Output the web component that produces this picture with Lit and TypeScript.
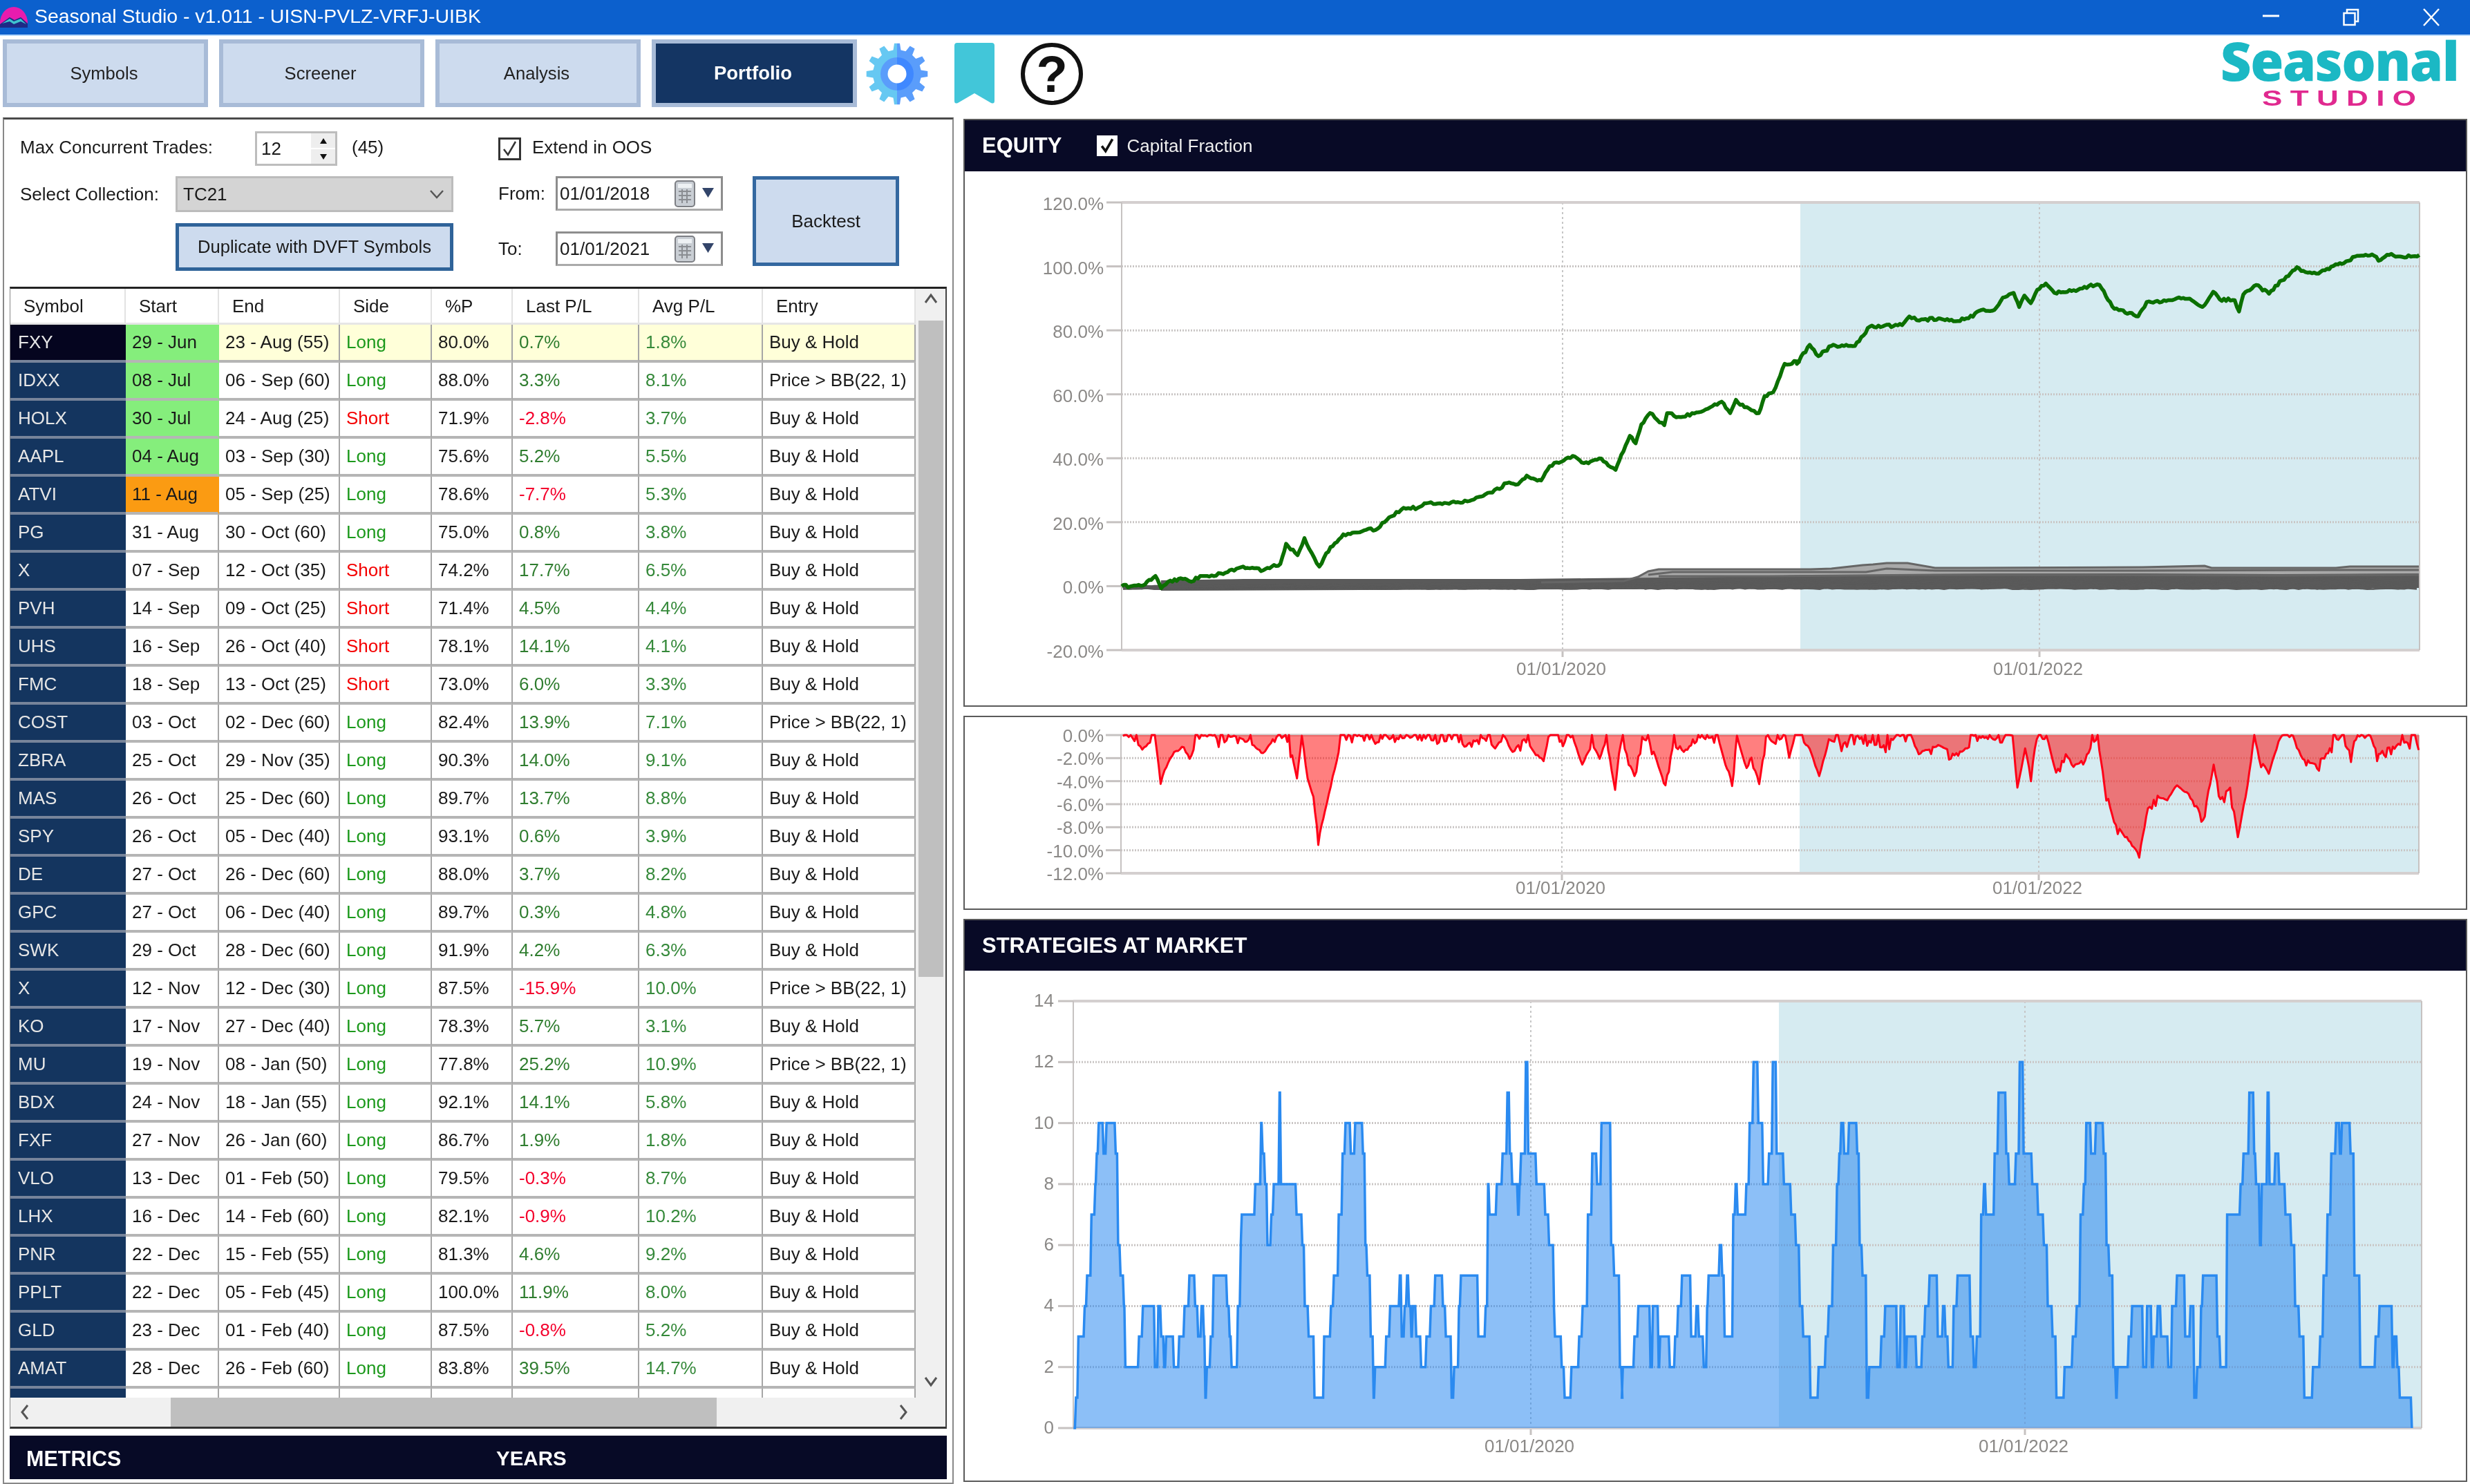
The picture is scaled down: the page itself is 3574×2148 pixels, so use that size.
import { LitElement, html, css, svg } from "lit";
import { customElement } from "lit/decorators.js";
import { classMap } from "lit/directives/class-map.js";

type Row = [string, string, string, string, string, string, string, string];
const BH = "Buy & Hold";
const PB = "Price > BB(22, 1)";
const rows: Row[] = [
  ["FXY", "29 - Jun", "23 - Aug (55)", "Long", "80.0%", "0.7%", "1.8%", BH],
  ["IDXX", "08 - Jul", "06 - Sep (60)", "Long", "88.0%", "3.3%", "8.1%", PB],
  ["HOLX", "30 - Jul", "24 - Aug (25)", "Short", "71.9%", "-2.8%", "3.7%", BH],
  ["AAPL", "04 - Aug", "03 - Sep (30)", "Long", "75.6%", "5.2%", "5.5%", BH],
  ["ATVI", "11 - Aug", "05 - Sep (25)", "Long", "78.6%", "-7.7%", "5.3%", BH],
  ["PG", "31 - Aug", "30 - Oct (60)", "Long", "75.0%", "0.8%", "3.8%", BH],
  ["X", "07 - Sep", "12 - Oct (35)", "Short", "74.2%", "17.7%", "6.5%", BH],
  ["PVH", "14 - Sep", "09 - Oct (25)", "Short", "71.4%", "4.5%", "4.4%", BH],
  ["UHS", "16 - Sep", "26 - Oct (40)", "Short", "78.1%", "14.1%", "4.1%", BH],
  ["FMC", "18 - Sep", "13 - Oct (25)", "Short", "73.0%", "6.0%", "3.3%", BH],
  ["COST", "03 - Oct", "02 - Dec (60)", "Long", "82.4%", "13.9%", "7.1%", PB],
  ["ZBRA", "25 - Oct", "29 - Nov (35)", "Long", "90.3%", "14.0%", "9.1%", BH],
  ["MAS", "26 - Oct", "25 - Dec (60)", "Long", "89.7%", "13.7%", "8.8%", BH],
  ["SPY", "26 - Oct", "05 - Dec (40)", "Long", "93.1%", "0.6%", "3.9%", BH],
  ["DE", "27 - Oct", "26 - Dec (60)", "Long", "88.0%", "3.7%", "8.2%", BH],
  ["GPC", "27 - Oct", "06 - Dec (40)", "Long", "89.7%", "0.3%", "4.8%", BH],
  ["SWK", "29 - Oct", "28 - Dec (60)", "Long", "91.9%", "4.2%", "6.3%", BH],
  ["X", "12 - Nov", "12 - Dec (30)", "Long", "87.5%", "-15.9%", "10.0%", PB],
  ["KO", "17 - Nov", "27 - Dec (40)", "Long", "78.3%", "5.7%", "3.1%", BH],
  ["MU", "19 - Nov", "08 - Jan (50)", "Long", "77.8%", "25.2%", "10.9%", PB],
  ["BDX", "24 - Nov", "18 - Jan (55)", "Long", "92.1%", "14.1%", "5.8%", BH],
  ["FXF", "27 - Nov", "26 - Jan (60)", "Long", "86.7%", "1.9%", "1.8%", BH],
  ["VLO", "13 - Dec", "01 - Feb (50)", "Long", "79.5%", "-0.3%", "8.7%", BH],
  ["LHX", "16 - Dec", "14 - Feb (60)", "Long", "82.1%", "-0.9%", "10.2%", BH],
  ["PNR", "22 - Dec", "15 - Feb (55)", "Long", "81.3%", "4.6%", "9.2%", BH],
  ["PPLT", "22 - Dec", "05 - Feb (45)", "Long", "100.0%", "11.9%", "8.0%", BH],
  ["GLD", "23 - Dec", "01 - Feb (40)", "Long", "87.5%", "-0.8%", "5.2%", BH],
  ["AMAT", "28 - Dec", "26 - Feb (60)", "Long", "83.8%", "39.5%", "14.7%", BH],
  ["", "", "", "", "", "", "", ""],
];
const headers = ["Symbol", "Start", "End", "Side", "%P", "Last P/L", "Avg P/L", "Entry"];
const startColor: Record<number, string> = { 0: "g", 1: "g", 2: "g", 3: "g", 4: "o" };

function rng(seed: number) {
  return () => {
    seed |= 0; seed = (seed + 0x6d2b79f5) | 0;
    let t = Math.imul(seed ^ (seed >>> 15), 1 | seed);
    t = (t + Math.imul(t ^ (t >>> 7), 61 | t)) ^ t;
    return ((t ^ (t >>> 14)) >>> 0) / 4294967296;
  };
}

const eqA = [[293,1237],[330,1235],[352,1210],[362,1242],[378,1222],[400,1218],[415,1225],[430,1210],[470,1205],[505,1185],[540,1195],[570,1178],[580,1125],[600,1155],[612,1110],[625,1150],[638,1185],[650,1150],[680,1100],[700,1095],[740,1085],[760,1055],[785,1030],[810,1030],[825,1018],[880,1015],[900,1012],[940,990],[965,965],[985,968],[1000,945],[1015,955],[1025,958],[1040,920],[1080,893],[1100,912],[1130,900],[1155,930],[1165,890],[1180,840],[1190,860],[1200,810],[1215,780],[1240,812],[1245,780],[1265,790],[1300,778],[1340,750],[1355,780],[1365,745],[1380,765],[1405,780],[1415,735],[1430,725],[1450,650],[1475,645]]
  .map(([x, y]) => [1380 + x / 1.206, 170 + y / 1.823]);
const eqB = [[0,650],[30,600],[50,630],[80,603],[135,603],[170,552],[245,548],[262,525],[285,536],[330,530],[365,538],[400,530],[430,508],[460,508],[480,475],[505,463],[518,500],[530,470],[545,490],[560,455],[580,438],[600,463],[640,458],[680,445],[705,442],[740,505],[795,525],[815,487],[850,487],[890,475],[915,478],[945,500],[970,460],[985,480],[1020,482],[1030,512],[1040,467],[1070,442],[1100,465],[1130,430],[1165,395],[1175,405],[1215,412],[1260,388],[1310,365],[1345,365],[1355,378],[1385,360],[1400,367],[1450,363]]
  .map(([x, y]) => [2600 + x / 1.61, 170 + y / 1.823]);

function jitterPts(pts: number[][], step: number, amp: number, seed: number, minY = -Infinity) {
  const r = rng(seed);
  const out: number[][] = [];
  for (let i = 0; i < pts.length - 1; i++) {
    const [x0, y0] = pts[i];
    const [x1, y1] = pts[i + 1];
    const n = Math.max(1, Math.round((x1 - x0) / step));
    for (let k = 0; k < n; k++) {
      const t = k / n;
      const a = k === 0 ? 0 : (r() - 0.5) * amp;
      out.push([x0 + (x1 - x0) * t, Math.max(minY, y0 + (y1 - y0) * t + a)]);
    }
  }
  out.push(pts[pts.length - 1]);
  return out;
}
const toPoints = (p: number[][]) => p.map(([x, y]) => `${x.toFixed(1)},${y.toFixed(1)}`).join(" ");
const equityLine = toPoints(jitterPts([...eqA, ...eqB], 3.2, 4.2, 7));

function greyLines() {
  const r = rng(21);
  const lines: string[] = [];
  const x0 = 1625, x1 = 3500;
  for (let i = 0; i < 34; i++) {
    const top = i / 33;
    const pts: string[] = [];
    for (let x = x0; x <= x1; x += 9) {
      const t = (x - x0) / (x1 - x0);
      const rise = t < 0.3 ? (t / 0.3) * 5 : t < 0.5 ? 5 + (t - 0.3) * 30 : 11 + (t - 0.5) * 8;
      const y = 852 - top * (rise + 3) + (r() - 0.5) * 2.4;
      pts.push(`${x},${y.toFixed(1)}`);
    }
    lines.push(pts.join(" "));
  }
  return lines;
}
const greyBundle = greyLines();
const upper = (ys: number[][]) => ys.map(([x, y]) => `${x},${y}`).join(" ");
const upA = [[2230,843],[2350,841],[2370,835],[2385,827],[2400,824],[2620,824],[2650,823],[2695,818],[2710,817],[2730,815],[2760,815],[2800,822],[2850,822],[3100,821],[3190,819],[3200,822],[3380,822],[3400,820],[3500,820]];
const greyUpperA = upper(upA);
const greyUpperB = upper([[2385,832],[2420,828],[2700,828],[2730,823],[2800,826],[3100,826],[3400,825],[3500,825]]);
const greyUpperC = upper([[2400,834],[2560,834],[2800,832],[3000,832],[3300,833],[3500,832]]);
const greyHaze = upper([...upA, [3500, 838], [2230, 843]]);
const greyBlock = upper([[1680,855],[1680,840],[1800,838],[2200,838],[2300,837],[2500,835],[2620,832],[2700,832],[2890,830],[3100,830],[3300,831],[3500,830],[3500,851],[2900,851],[2300,853]]);

const ddRaw = [[175,135],[185,145],[195,195],[203,165],[208,135],[214,325],[222,250],[228,205],[238,185],[244,235],[252,150],[258,135],[270,135],[278,165],[290,135],[305,160],[320,210],[330,150],[345,135],[350,220],[355,320],[360,135],[366,320],[372,400],[377,590],[384,460],[392,310],[400,170],[410,135],[430,135],[436,170],[445,140],[460,150],[470,135],[480,160],[490,145],[500,170],[515,150],[530,180],[545,140],[560,190],[570,140],[578,205],[590,150],[600,205],[610,245],[615,140],[625,135],[630,165],[640,135],[650,260],[660,170],[668,235],[675,150],[684,370],[690,140],[698,240],[704,310],[712,140],[722,180],[736,350],[745,150],[755,205],[770,150],[790,135],[798,260],[805,330],[810,135],[820,275],[825,230],[833,345],[840,140],[850,170],[860,135],[864,230],[870,135],[885,190],[895,310],[905,150],[920,170],[935,135],[960,185],[975,140],[990,135],[998,215],[1018,175],[1035,220],[1050,185],[1055,135],[1075,150],[1095,135],[1100,360],[1108,190],[1114,310],[1120,135],[1130,135],[1140,295],[1150,215],[1158,270],[1170,230],[1183,135],[1190,350],[1200,510],[1215,590],[1226,650],[1235,450],[1245,395],[1255,415],[1265,350],[1275,380],[1285,440],[1292,500],[1303,260],[1310,410],[1320,360],[1328,575],[1338,350],[1345,135],[1350,235],[1360,300],[1372,135],[1385,135],[1395,235],[1410,260],[1425,180],[1432,135],[1445,215],[1450,135],[1465,135],[1472,215],[1490,175],[1500,165],[1515,170]];
const ddPts = ddRaw.map(([x, y]) => [1380 + x / 0.7147, 1020 + y / 3]);
const ddJ = (() => {
  const base = jitterPts(ddPts, 2.6, 4, 3, 1064);
  const r = rng(11);
  return base.map(([x, y]) => {
    const f = y < 1078 && r() > 0.6 ? -(y - 1064) : 0;
    const d = r() > 0.86 ? 4 + r() * 8 : 0;
    return [x, Math.max(1064, y + f + d)];
  });
})();
const ddLine = toPoints(ddJ);
const ddArea = `1623,1064 ${ddLine} 3500,1064`;

const mkA = [[247,0],[250,1],[255,3],[268,4],[273,5],[282,7],[290,8],[293,9],[297,10],[307,9],[313,10],[332,9],[337,6],[342,5],[349,4],[352,2],[380,3],[388,4],[413,2],[420,4],[426,3],[432,2],[436,3],[452,2],[463,3],[474,4],[484,5],[496,4],[502,3],[509,4],[514,3],[517,1],[520,2],[528,3],[534,5],[562,4],[567,3],[571,2],[584,4],[590,6],[592,7],[620,8],[632,10],[635,9],[640,8],[645,6],[653,7],[658,8],[670,11],[673,8],[705,7],[717,6],[722,4],[730,3],[742,1],[762,3],[776,4],[782,5],[792,7],[800,9],[806,10],[817,9],[826,10],[842,9],[847,6],[851,5],[858,3],[864,1],[867,2],[890,3],[898,4],[918,5],[922,3],[928,4],[933,5],[937,4],[942,3],[945,4],[952,3],[962,2],[973,3],[982,4],[991,5],[1007,4],[1013,3],[1025,1],[1030,2],[1040,4],[1044,5],[1080,3],[1095,4],[1100,8],[1103,7],[1118,8],[1130,9],[1140,11],[1145,9],[1150,8],[1162,7],[1165,8],[1168,9],[1178,12],[1183,9],[1200,8],[1218,7],[1226,6],[1236,4],[1238,3],[1252,2],[1258,1],[1272,2],[1288,3],[1295,4],[1306,7],[1315,9],[1325,8],[1334,10],[1354,6],[1360,5],[1372,2],[1377,1],[1378,2],[1402,3],[1410,4],[1435,2],[1440,4],[1452,2],[1455,3],[1475,2],[1486,3],[1492,4],[1500,5],[1519,3],[1530,4],[1535,3],[1545,2],[1552,4],[1555,5]];
const mkB = [[10,6],[15,5],[20,3],[38,7],[43,8],[47,7],[65,8],[72,10],[80,12],[90,10],[100,8],[112,9],[120,12],[128,9],[143,8],[158,7],[168,6],[176,4],[183,3],[198,1],[215,2],[230,3],[236,4],[245,6],[253,8],[258,9],[262,10],[268,9],[278,10],[295,9],[300,6],[306,5],[315,1],[320,2],[345,3],[353,4],[378,2],[385,4],[394,2],[398,3],[418,2],[430,3],[436,4],[445,5],[462,3],[473,4],[478,3],[484,2],[495,4],[503,5],[530,3],[537,2],[543,3],[552,7],[558,8],[562,7],[575,7],[580,9],[588,11],[604,9],[610,8],[624,9],[632,12],[640,9],[658,8],[670,7],[682,6],[690,4],[700,3],[708,1],[725,2],[742,3],[750,4],[758,7],[765,8],[770,10],[780,9],[790,10],[806,9],[812,6],[818,5],[826,2],[832,1],[835,2],[858,3],[865,4],[888,2],[896,4],[906,2],[910,3],[918,4],[925,3],[933,3],[940,2],[948,4],[958,5],[975,3],[986,4],[994,1],[1000,2],[1008,4],[1012,5],[1042,3],[1048,2],[1062,7],[1090,8],[1096,9],[1108,11],[1118,9],[1122,8],[1130,6],[1134,8],[1146,11],[1150,8],[1162,9],[1170,8],[1183,7],[1195,6],[1203,4],[1212,3],[1222,1],[1240,2],[1255,3],[1262,5],[1270,7],[1278,9],[1288,10],[1296,9],[1300,10],[1318,9],[1326,5],[1338,2],[1370,3],[1378,4],[1405,2],[1409,3],[1415,2],[1420,1],[1445,0]];
const mkY = (l: number) => 2067 - l * 44.14;
const mkSteps = [
  ...mkA.map(([x, l]) => [1380 + x / 1.4255, l]),
  ...mkB.map(([x, l]) => [2480 + x / 1.433, l]),
];
function stepLine() {
  const pts: string[] = [];
  let prev = 0;
  for (const [x, l] of mkSteps) {
    pts.push(`${x.toFixed(1)},${mkY(prev).toFixed(1)}`);
    pts.push(`${(x + 1.5).toFixed(1)},${mkY(l).toFixed(1)}`);
    prev = l;
  }
  return pts.join(" ");
}
const mkLine = stepLine();

function gearPath(cx: number, cy: number, R: number, r: number, teeth: number) {
  const p: string[] = [];
  for (let i = 0; i < teeth; i++) {
    const a = (i / teeth) * Math.PI * 2 - Math.PI / 2;
    const w = (Math.PI * 2) / teeth;
    const pts: [number, number][] = [
      [r, a - w * 0.3], [R, a - w * 0.17], [R, a + w * 0.17], [r, a + w * 0.3],
    ];
    for (const [rad, ang] of pts) {
      p.push(`${(cx + rad * Math.cos(ang)).toFixed(1)} ${(cy + rad * Math.sin(ang)).toFixed(1)}`);
    }
  }
  return "M" + p.join("L") + "Z";
}

function axes(opts: {
  l: number; r: number; t: number; b: number; oos: number;
  ys: { y: number; label: string }[]; xs: number[]; labelRight: number; dateY: number;
  dateOff: number; labelOff: number;
}) {
  const { l, r, t, b, oos, ys, xs, labelRight, dateY, dateOff, labelOff } = opts;
  return svg`
    <rect class="oos" x=${oos} y=${t} width=${r - oos} height=${b - t}></rect>
    ${ys.map((g, i) => svg`
      ${i > 0 && i < ys.length - 1 ? svg`<line class="grid" x1=${l} x2=${r} y1=${g.y} y2=${g.y}></line>` : ""}
      <line class="tick" x1=${l - 22} x2=${l} y1=${g.y} y2=${g.y}></line>
      <text class="axis" x=${labelRight} y=${g.y + labelOff} text-anchor="end">${g.label}</text>
    `)}
    ${xs.map((x) => svg`
      <line class="vgrid" x1=${x} x2=${x} y1=${t} y2=${b}></line>
      <line class="tick" x1=${x} x2=${x} y1=${b} y2=${b + 10}></line>
      <text class="axis" x=${x + dateOff} y=${dateY} text-anchor="middle">01/01/${x === xs[0] ? 2020 : 2022}</text>
    `)}
    <line class="frame" x1=${l} x2=${r} y1=${t} y2=${t}></line>
    <line class="frame" x1=${l} x2=${r} y1=${b} y2=${b}></line>
    <line class="side" x1=${l} x2=${l} y1=${t} y2=${b}></line>
    <line class="side" x1=${r} x2=${r} y1=${t} y2=${b}></line>
  `;
}

@customElement("app-root")
export class AppRoot extends LitElement {
  static styles = css`
    :host {
      display: block; width: 3574px; height: 2148px; overflow: hidden; background: #fff;
      font-family: "Liberation Sans", Arial, sans-serif; font-size: 26px; color: #1a1a1a;
      filter: blur(0.7px);
    }
    .app { display: flex; flex-direction: column; height: 2148px; }

    .titlebar {
      height: 50px; background: #0c60cd; color: #fff; display: flex; align-items: center;
      border-bottom: 2px solid #b5d7fb; box-sizing: content-box; flex: none;
    }
    .appicon { width: 42px; height: 42px; flex: none; margin-left: 0; }
    .titletext { margin: 0 0 4px 8px; font-size: 28.5px; letter-spacing: -0.03px; white-space: nowrap; }
    .winctl { margin-left: auto; display: flex; align-items: center; gap: 92px; margin-right: 44px; }
    .winctl svg { display: block; width: 24px; height: 26px; }

    .toolbar { display: flex; height: 118px; flex: none; align-items: flex-start; padding: 5px 0 0 4px; box-sizing: border-box; }
    .tab {
      width: 297px; height: 98px; box-sizing: border-box; background: #cddbee;
      border: 6px solid #a8bbd7; display: flex; align-items: center; justify-content: center;
      margin-right: 16px; font-size: 25.6px; color: #222; padding-right: 4px;
    }
    .tab.on { background: #143563; color: #fff; font-weight: 700; font-size: 27.5px; }
    .gear { width: 90px; height: 90px; margin: 5px 0 0 -3px; flex: none; }
    .bookmark { width: 58px; height: 88px; margin: 5px 0 0 38px; flex: none; }
    .help { width: 90px; height: 90px; margin: 5px 0 0 38px; flex: none; }
    .logo { margin: -3px 17px 0 auto; width: 344px; display: flex; flex-direction: column; align-items: center; }
    .logo .a { font-family: "Open Sans", sans-serif; font-weight: 800; font-size: 78px; line-height: 66px; color: #1bb8c4; letter-spacing: -1.7px; }
    .logo .b { font-family: "Liberation Sans", sans-serif; font-weight: 700; font-size: 31px; line-height: 26px; letter-spacing: 8px; color: #e0298f; margin-top: 10px; padding-left: 8px; transform: scaleX(1.42); }

    .main { display: flex; flex: 1; min-height: 0; padding-left: 4px; }

    .left {
      width: 1376px; flex: none; box-sizing: border-box; border: 2px solid #888; border-top: 3px solid #4a4a4a;
      display: flex; flex-direction: column; padding: 0 6px 0 8px;
    }
    .controls { height: 242px; flex: none; display: flex; padding: 17px 0 0 15px; box-sizing: border-box; }
    .col1 { width: 627px; flex: none; }
    .col2 { width: 325px; flex: none; margin-left: 65px; }
    .r { display: flex; align-items: center; }
    .r1 { height: 50px; }
    .lbl1 { width: 340px; flex: none; margin-bottom: 4px; }
    .lbl2 { width: 225px; flex: none; }
    .spin {
      width: 119px; height: 50px; box-sizing: border-box; border: 3px solid #bdbdbd; display: flex;
      align-items: center; justify-content: space-between; padding-left: 6px; flex: none;
    }
    .spinbtns { width: 35px; height: 44px; display: flex; flex-direction: column; gap: 2px; }
    .spinbtns span { flex: 1; background: #eee; display: flex; align-items: center; justify-content: center; }
    .spinbtns i { width: 0; height: 0; border-left: 5px solid transparent; border-right: 5px solid transparent; }
    .spinbtns i.u { border-bottom: 8px solid #111; }
    .spinbtns i.d { border-top: 8px solid #111; }
    .count { margin-left: 21px; margin-bottom: 4px; }
    .check { width: 33px; height: 33px; box-sizing: border-box; flex: none; display: block; }
    .ext { margin: 0 0 4px 16px; }
    .r2 { height: 52px; margin-top: 15px; }
    .select {
      width: 402px; height: 52px; box-sizing: border-box; background: #d4d4d4; border: 3px solid #bcbcbc; flex: none;
      display: flex; align-items: center; justify-content: space-between; padding: 0 10px 0 8px;
    }
    .dup {
      margin: 16px 0 0 225px; width: 402px; height: 69px; box-sizing: border-box; background: #cddbee;
      border: 5px solid #2f6399; display: flex; align-items: center; justify-content: center; font-size: 25.6px;
    }
    .dlabel { width: 83px; flex: none; }
    .date {
      width: 242px; height: 50px; flex: none; box-sizing: border-box; border: 3px solid #8d8d8d;
      border-bottom-color: #aaa; display: flex; align-items: center; padding-left: 3px;
    }
    .date svg { width: 62px; height: 44px; margin-left: auto; margin-right: 6px; display: block; }
    .c2a { height: 50px; }
    .c2b { margin-top: 15px; }
    .c2c { margin-top: 30px; }
    .backtest {
      width: 212px; height: 130px; box-sizing: border-box; margin: 65px 0 0 43px; background: #cddbee;
      border: 5px solid #3468a0; display: flex; align-items: center; justify-content: center; flex: none;
    }

    .tablewrap {
      height: 1653px; flex: none; box-sizing: border-box; border-top: 3px solid #222; border-bottom: 3px solid #333;
      border-left: 1px solid #888; border-right: 2px solid #444; display: grid;
      grid-template-columns: 1310px 1fr; grid-template-rows: 1fr 42px; width: 1356px; overflow: hidden;
    }
    .tbl { min-height: 0; overflow: hidden; grid-column: 1; grid-row: 1; }
    .hrow, .drow {
      display: grid; grid-template-columns: 167px 135px 175px 133px 117px 183px 179px 221px;
    }
    .hrow { height: 52px; }
    .hrow div {
      padding: 2px 0 0 19px; display: flex; align-items: center; border-right: 2px solid #e2e2e2;
      border-bottom: 3px solid #e6e6e6; box-sizing: border-box; white-space: nowrap;
    }
    .drow { height: 55px; }
    .drow div {
      padding-left: 9px; display: flex; align-items: center; box-sizing: border-box; white-space: nowrap;
      border-right: 2px solid #a6a6a6; border-bottom: 4px solid #b5b5b5; overflow: hidden;
    }
    .drow.sel div { background: #ffffd9; }
    .drow div.sym { background: #14355f; color: #e6e6e6; padding-left: 11px; border-right: none; border-bottom-color: #77849a; }
    .drow.sel div.sym { background: #05051f; }
    .drow div.g { background: #85ee7c; border-right-color: #85ee7c; }
    .drow div.o { background: #fb9b12; border-right-color: #fb9b12; }
    .long { color: #1c991c; }
    .short { color: #f40000; }
    .pos { color: #2f7d2f; }
    .avg { color: #35893a; }
    .neg { color: #f4002c; }
    .vs { grid-column: 2; grid-row: 1 / 3; background: #f0f0f0; display: flex; flex-direction: column; align-items: center; }
    .vs svg { display: block; width: 22px; height: 16px; flex: none; }
    .vs .up { margin-top: 6px; }
    .vs .thumb { width: 36px; height: 950px; background: #bfbfbf; margin-top: 24px; flex: none; }
    .vs .dn { margin-top: 578px; }
    .hs { grid-column: 1; grid-row: 2; background: #f0f0f0; display: flex; align-items: center; height: 42px; }
    .hs svg { display: block; width: 18px; height: 24px; flex: none; }
    .hs .thumb { width: 790px; height: 42px; background: #bfbfbf; margin-left: 202px; flex: none; }
    .hs .al { margin-left: 12px; }
    .hs .ar { margin-left: 261px; }
    .metrics {
      margin-top: 10px; height: 63px; padding-top: 3px; box-sizing: border-box; flex: none; background: #070a26; color: #fff; font-weight: 700; font-size: 30.5px;
      display: flex; align-items: center; width: 1356px;
    }
    .metrics .m { width: 680px; padding-left: 24px; box-sizing: content-box; flex: none; }
    .metrics .y { font-size: 29.5px; }

    .right { margin-left: 14px; margin-top: 2px; width: 2176px; flex: none; display: flex; flex-direction: column; }
    .panel { border: 2px solid #5a5a5a; box-sizing: border-box; background: #fff; }
    .p1 { height: 851px; flex: none; }
    .p2 { height: 281px; flex: none; margin-top: 13px; }
    .p3 { flex: none; height: 815px; margin-top: 13px; }
    .phead {
      height: 74px; background: #080a26; color: #fff; display: flex; align-items: center;
      padding-left: 25px; font-weight: 700; font-size: 31px;
    }
    .p3 .phead { height: 73px; }
    .phead .cap { font-weight: 400; font-size: 26px; color: #eee; margin-left: 13px; }
    .phead .check { margin-left: 51px; width: 30px; height: 30px; }
    .chart { display: block; }
    .chart .axis { font-family: "Liberation Sans", Arial, sans-serif; font-size: 26px; fill: #8b8987; }
    .chart .oos { fill: #d6ebf1; }
    .chart .grid { stroke: #c9c5c4; stroke-width: 3; stroke-dasharray: 2 2; }
    .chart .vgrid { stroke: #c6c6c6; stroke-width: 2; stroke-dasharray: 3 4; }
    .chart .tick { stroke: #c6c2c1; stroke-width: 3; }
    .chart .frame { stroke: #d4cfcf; stroke-width: 4; }
    .chart .side { stroke: #c6c2c1; stroke-width: 2; }
    .chart .eq { fill: none; stroke: #0b7000; stroke-width: 5.5; stroke-linejoin: round; }
    .chart .greyl { fill: none; stroke: #5a5a5a; stroke-width: 2; }
    .chart .greyu { fill: none; stroke: #666; stroke-width: 3; }
    .chart .greyh { fill: #a9a9a9; }
    .chart .greyb { fill: #5a5a5a; }
    .chart .dda { fill: rgba(255, 0, 0, 0.5); }
    .chart .ddl { fill: none; stroke: #ff0018; stroke-width: 3; stroke-linejoin: round; }
    .chart .mka { fill: rgba(26, 128, 240, 0.5); }
    .chart .mkl { fill: none; stroke: #2a8af0; stroke-width: 3.5; }
  `;

  private checkbox(light: boolean) {
    return html`<svg class="check" viewBox="0 0 33 33">
      <rect x="1.5" y="1.5" width="30" height="30" fill="#fff" stroke=${light ? "#fff" : "#333"} stroke-width="3"></rect>
      <path d="M8 17 L14 25 L25 6" fill="none" stroke=${light ? "#111" : "#333"} stroke-width=${light ? 4 : 2.5}></path>
    </svg>`;
  }

  private cal() {
    return html`<svg viewBox="0 0 62 44">
      <rect x="2" y="4" width="28" height="37" rx="4" fill="#c9ced4" stroke="#7d7f84" stroke-width="2"></rect>
      <rect x="6" y="8" width="20" height="6" fill="#eef1f4"></rect>
      <path d="M7 19h18M7 25h18M7 31h18M12 16v20M19 16v20" stroke="#8a8d92" stroke-width="2"></path>
      <path d="M41 14h17l-8.5 14z" fill="#33456a"></path>
    </svg>`;
  }

  render() {
    const eqYs = [120, 100, 80, 60, 40, 20, 0, -20].map((v, i) => ({ y: 293 + i * 92.57, label: v.toFixed(1) + "%" }));
    const ddYs = [0, -2, -4, -6, -8, -10, -12].map((v, i) => ({ y: 1064 + i * 33.33, label: (v === 0 ? "0.0" : v.toFixed(1)) + "%" }));
    const mkYs = [14, 12, 10, 8, 6, 4, 2, 0].map((v) => ({ y: mkY(v), label: String(v) }));
    return html`<div class="app">
      <div class="titlebar">
        <svg class="appicon" viewBox="0 0 42 42">
          <path d="M0 29 A20 23 0 0 1 40 29 L40 36 L0 36Z" fill="#e81cae"></path>
          <path d="M0 31 L14 21 L21 25 L30 21 L40 30 L40 36 L0 36Z" fill="#1d2a86"></path>
          <path d="M3 30 L14 23 L20 27 L30 23 L38 31 L30 27 L20 31 L14 27Z" fill="#3fc4cf"></path>
        </svg>
        <span class="titletext">Seasonal Studio - v1.011 - UISN-PVLZ-VRFJ-UIBK</span>
        <div class="winctl">
          <svg viewBox="0 0 24 26"><path d="M0 11h24" stroke="#fff" stroke-width="3"></path></svg>
          <svg viewBox="0 0 24 26"><rect x="1.5" y="7" width="16" height="17" fill="none" stroke="#fff" stroke-width="2.5"></rect><path d="M6 7V2h16v17h-4" fill="none" stroke="#fff" stroke-width="2.5"></path></svg>
          <svg viewBox="0 0 24 26"><path d="M1 1L23 25M23 1L1 25" stroke="#fff" stroke-width="2.5"></path></svg>
        </div>
      </div>

      <div class="toolbar">
        <div class="tab">Symbols</div>
        <div class="tab">Screener</div>
        <div class="tab">Analysis</div>
        <div class="tab on">Portfolio</div>
        <svg class="gear" viewBox="0 0 90 90">
          <defs>
            <clipPath id="gl"><rect x="0" y="0" width="45" height="90"></rect></clipPath>
            <clipPath id="gr"><rect x="45" y="0" width="45" height="90"></rect></clipPath>
          </defs>
          <path d=${gearPath(45, 45, 44.5, 35, 12)} fill="#66c8f2" clip-path="url(#gl)"></path>
          <path d=${gearPath(45, 45, 44.5, 35, 12)} fill="#5a9dfb" clip-path="url(#gr)"></path>
          <circle cx="45" cy="45" r="24" fill="#5a9dfb" clip-path="url(#gl)"></circle>
          <circle cx="45" cy="45" r="24" fill="#3f88ff" clip-path="url(#gr)"></circle>
          <circle cx="45" cy="45" r="13.5" fill="#fff"></circle>
        </svg>
        <svg class="bookmark" viewBox="0 0 58 88"><path d="M4 0H54Q58 0 58 4V84Q58 89 53 87L29 73L5 87Q0 89 0 84V4Q0 0 4 0Z" fill="#42c6d9"></path></svg>
        <svg class="help" viewBox="0 0 90 90">
          <circle cx="45" cy="45" r="42" fill="#fff" stroke="#111" stroke-width="6"></circle>
          <text x="45" y="71" text-anchor="middle" font-family="Liberation Sans, sans-serif" font-weight="700" font-size="74" fill="#111">?</text>
        </svg>
        <div class="logo"><span class="a">Seasonal</span><span class="b">STUDIO</span></div>
      </div>

      <div class="main">
        <section class="left">
          <div class="controls">
            <div class="col1">
              <div class="r r1">
                <span class="lbl1">Max Concurrent Trades:</span>
                <div class="spin"><span>12</span><div class="spinbtns"><span><i class="u"></i></span><span><i class="d"></i></span></div></div>
                <span class="count">(45)</span>
              </div>
              <div class="r r2">
                <span class="lbl2">Select Collection:</span>
                <div class="select"><span>TC21</span>
                  <svg width="22" height="14" viewBox="0 0 22 14"><path d="M2 2L11 12L20 2" fill="none" stroke="#555" stroke-width="2.5"></path></svg>
                </div>
              </div>
              <div class="dup">Duplicate with DVFT Symbols</div>
            </div>
            <div class="col2">
              <div class="r c2a">${this.checkbox(false)}<span class="ext">Extend in OOS</span></div>
              <div class="r c2b"><span class="dlabel">From:</span><div class="date"><span>01/01/2018</span>${this.cal()}</div></div>
              <div class="r c2c"><span class="dlabel">To:</span><div class="date"><span>01/01/2021</span>${this.cal()}</div></div>
            </div>
            <div class="backtest">Backtest</div>
          </div>

          <div class="tablewrap">
            <div class="tbl">
              <div class="hrow">${headers.map((h) => html`<div>${h}</div>`)}</div>
              ${rows.map((r, i) => html`<div class=${classMap({ drow: true, sel: i === 0 })}>
                <div class="sym">${r[0]}</div>
                <div class=${startColor[i] ?? ""}>${r[1]}</div>
                <div>${r[2]}</div>
                <div class=${r[3] === "Short" ? "short" : "long"}>${r[3]}</div>
                <div>${r[4]}</div>
                <div class=${r[5].startsWith("-") ? "neg" : "pos"}>${r[5]}</div>
                <div class="avg">${r[6]}</div>
                <div>${r[7]}</div>
              </div>`)}
            </div>
            <div class="vs">
              <svg class="up" viewBox="0 0 22 16"><path d="M3 14L11 3L19 14" fill="none" stroke="#555" stroke-width="3"></path></svg>
              <div class="thumb"></div>
              <svg class="dn" viewBox="0 0 22 16"><path d="M3 2L11 13L19 2" fill="none" stroke="#555" stroke-width="3"></path></svg>
            </div>
            <div class="hs">
              <svg class="al" viewBox="0 0 18 24"><path d="M13 2L5 12L13 22" fill="none" stroke="#555" stroke-width="3"></path></svg>
              <div class="thumb"></div>
              <svg class="ar" viewBox="0 0 18 24"><path d="M5 2L13 12L5 22" fill="none" stroke="#555" stroke-width="3"></path></svg>
            </div>
          </div>
          <div class="metrics"><span class="m">METRICS</span><span class="y">YEARS</span></div>
        </section>

        <div class="right">
          <section class="panel p1">
            <div class="phead">EQUITY ${this.checkbox(true)}<span class="cap">Capital Fraction</span></div>
            <svg class="chart" width="2172" height="773" viewBox="1396 248 2172 773">
              ${axes({ l: 1623, r: 3501, t: 293, b: 941, oos: 2605, ys: eqYs, xs: [2261, 2951], labelRight: 1597, dateY: 977, dateOff: -2, labelOff: 11 })}
              <polygon class="greyh" points=${greyHaze}></polygon>
              <polygon class="greyb" points=${greyBlock}></polygon>
              ${greyBundle.map((p) => svg`<polyline class="greyl" points=${p}></polyline>`)}
              <polyline class="greyu" points=${greyUpperA}></polyline>
              <polyline class="greyu" points=${greyUpperB}></polyline>
              <polyline class="greyu" points=${greyUpperC}></polyline>
              <polyline class="eq" points=${equityLine}></polyline>
            </svg>
          </section>
          <section class="panel p2">
            <svg class="chart" width="2172" height="277" viewBox="1396 1038 2172 277">
              ${axes({ l: 1622, r: 3500, t: 1064, b: 1264, oos: 2604, ys: ddYs, xs: [2260, 2950], labelRight: 1597, dateY: 1294, dateOff: -2, labelOff: 10 })}
              <polygon class="dda" points=${ddArea}></polygon>
              <polyline class="ddl" points=${ddLine}></polyline>
            </svg>
          </section>
          <section class="panel p3">
            <div class="phead">STRATEGIES AT MARKET</div>
            <svg class="chart" width="2172" height="738" viewBox="1396 1405 2172 738">
              ${axes({ l: 1553, r: 3504, t: 1449, b: 2067, oos: 2574, ys: mkYs, xs: [2215, 2930], labelRight: 1525, dateY: 2102, dateOff: -2, labelOff: 8 })}
              <polygon class="mka" points=${mkLine}></polygon>
              <polyline class="mkl" points=${mkLine}></polyline>
            </svg>
          </section>
        </div>
      </div>
    </div>`;
  }
}
